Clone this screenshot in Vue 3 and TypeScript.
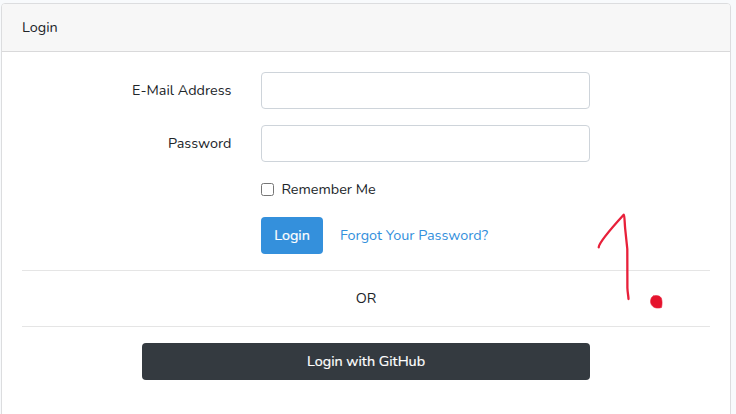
<script setup lang="ts">
import { ref } from 'vue'

const email = ref('')
const password = ref('')
const remember = ref(false)
</script>

<template>
  <main class="page">
    <section class="card">
      <header class="card-header">Login</header>
      <form class="card-body" @submit.prevent>
        <div class="row field">
          <label for="email" class="label">E-Mail Address</label>
          <input id="email" v-model="email" type="email" class="input" />
        </div>
        <div class="row field">
          <label for="password" class="label">Password</label>
          <input id="password" v-model="password" type="password" class="input" />
        </div>
        <div class="row remember">
          <label class="check">
            <input v-model="remember" type="checkbox" class="box" />
            <span>Remember Me</span>
          </label>
        </div>
        <div class="row actions">
          <div class="buttons">
            <button type="submit" class="btn primary">Login</button>
            <a href="#" class="link">Forgot Your Password?</a>
          </div>
        </div>
        <hr />
        <p class="or">OR</p>
        <hr />
        <button type="button" class="btn dark">Login with GitHub</button>
      </form>
    </section>
    <svg class="mark" width="76" height="104" viewBox="590 208 76 104" aria-hidden="true">
      <path d="M598.700 247.300 C599 243.500 608 232 623.700 214.800 C624.700 215.500 624.500 222 625.200 229 L627.300 249 L627.400 288 C627.600 293 628.300 295 628.500 299" />
      <path class="dot" d="M653.500 296 C656.500 295 660 295.600 661.300 298 C662.300 301 662.300 304 661.500 307.500 C658.500 308.500 655 308.300 653 306.600 C650.500 304.500 650 301.500 651 298.800 C651.500 297.300 652.300 296.500 653.500 296 Z" />
    </svg>
  </main>
</template>

<style>
body {
  background: #f8fafc;
  overflow: hidden;
}
</style>

<style scoped>
* {
  box-sizing: border-box;
}
.page {
  height: 414px;
  padding: 3px 5px 0 1px;
  overflow: hidden;
  position: relative;
  font-family: Nunito, Lato, sans-serif;
  font-size: 14.4px;
  line-height: 23px;
  color: #212529;
}
.card {
  height: 440px;
  background: #fff;
  border: 1px solid #dcdddf;
  border-radius: 4px;
}
.card-header {
  height: 48px;
  padding: 12px 20px;
  background: #f7f7f7;
  border-bottom: 1px solid #d9d9da;
  border-radius: 3px 3px 0 0;
}
.card-body {
  padding: 20px;
}
.row {
  display: grid;
  grid-template-columns: 209.5px 329px;
  column-gap: 29.5px;
}
.field {
  height: 37px;
  margin-bottom: 16px;
}
.label {
  padding-top: 7px;
  text-align: right;
  white-space: nowrap;
}
.input {
  width: 100%;
  height: 37px;
  margin: 0;
  padding: 6px 12px;
  font: inherit;
  background: #fff;
  border: 1px solid #ced4da;
  border-radius: 4px;
  outline: none;
}
.remember {
  height: 23px;
  margin-bottom: 16px;
}
.check,
.buttons {
  grid-column: 2;
  display: flex;
  align-items: center;
}
.box {
  appearance: none;
  width: 13px;
  height: 13px;
  margin: 0 7.4px 0 0;
  border: 1px solid #767676;
  border-radius: 2.5px;
  background: #fff;
}
.btn {
  height: 37px;
  padding: 0;
  border: 0;
  border-radius: 4px;
  color: #fff;
  font: inherit;
  -webkit-text-stroke: 0.2px #fff;
}
.primary {
  width: 62px;
  background: #3490dc;
}
.dark {
  display: block;
  width: 448px;
  margin-left: 120px;
  background: #343a40;
}
.link {
  margin-left: 17px;
  color: #3490dc;
  text-decoration: none;
}
hr {
  height: 1px;
  margin: 16px 0;
  border: 0;
  background: #e5e5e5;
}
.or {
  margin: 0;
  text-align: center;
}
.mark {
  position: absolute;
  left: 590px;
  top: 208px;
  fill: none;
  stroke: #e8203a;
  stroke-width: 2.3;
  stroke-linecap: round;
  stroke-linejoin: round;
}
.dot {
  fill: #e5132d;
  stroke-width: 0.6;
}
</style>
